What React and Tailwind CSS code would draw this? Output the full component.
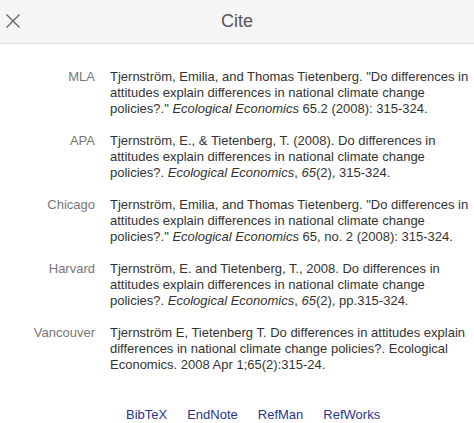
import React from "react";

const citations = [
  {
    style: "MLA",
    text: (
      <>
        Tjernström, Emilia, and Thomas Tietenberg. "Do differences in attitudes explain differences in national climate change policies?." <i>Ecological Economics</i> 65.2 (2008): 315-324.
      </>
    ),
  },
  {
    style: "APA",
    text: (
      <>
        Tjernström, E., &amp; Tietenberg, T. (2008). Do differences in attitudes explain differences in national climate change policies?. <i>Ecological Economics</i>, <i>65</i>(2), 315-324.
      </>
    ),
  },
  {
    style: "Chicago",
    text: (
      <>
        Tjernström, Emilia, and Thomas Tietenberg. "Do differences in attitudes explain differences in national climate change policies?." <i>Ecological Economics</i> 65, no. 2 (2008): 315-324.
      </>
    ),
  },
  {
    style: "Harvard",
    text: (
      <>
        Tjernström, E. and Tietenberg, T., 2008. Do differences in attitudes explain differences in national climate change policies?. <i>Ecological Economics</i>, <i>65</i>(2), pp.315-324.
      </>
    ),
  },
  {
    style: "Vancouver",
    text: (
      <>
        Tjernström E, Tietenberg T. Do differences in attitudes explain differences in national climate change policies?. Ecological Economics. 2008 Apr 1;65(2):315-24.
      </>
    ),
  },
];

export default function App() {
  return (
    <div className="w-[474px] h-[423px] bg-white overflow-hidden font-['Liberation_Sans',Arial,sans-serif]">
      {/* header */}
      <div className="relative h-[44px] bg-[#f5f5f5] border-b border-[#dedede] flex items-center justify-center">
        <button className="absolute left-[5px] top-[13px] w-[16px] h-[16px] text-[#666]">
          <svg viewBox="0 0 16 16" className="w-[16px] h-[16px]" stroke="currentColor" strokeWidth="1.4" fill="none">
            <path d="M1.5 1.5l13 13M14.5 1.5l-13 13" />
          </svg>
        </button>
        <h1 className="text-[18px] text-[#555]">Cite</h1>
      </div>

      {/* citations */}
      <div className="pt-[25px]">
        {citations.map((c) => (
          <div key={c.style} className="flex mb-[16px] text-[13px] leading-[16px]">
            <div className="w-[95px] shrink-0 text-right text-[#777]">{c.style}</div>
            <div className="pl-[15px] pr-[2px] text-[#333]">{c.text}</div>
          </div>
        ))}
      </div>

      {/* export links */}
      <div className="flex gap-[20px] pl-[126px] pt-[16px] text-[13px] text-[#283593]">
        <a href="#">BibTeX</a>
        <a href="#">EndNote</a>
        <a href="#">RefMan</a>
        <a href="#">RefWorks</a>
      </div>
    </div>
  );
}
